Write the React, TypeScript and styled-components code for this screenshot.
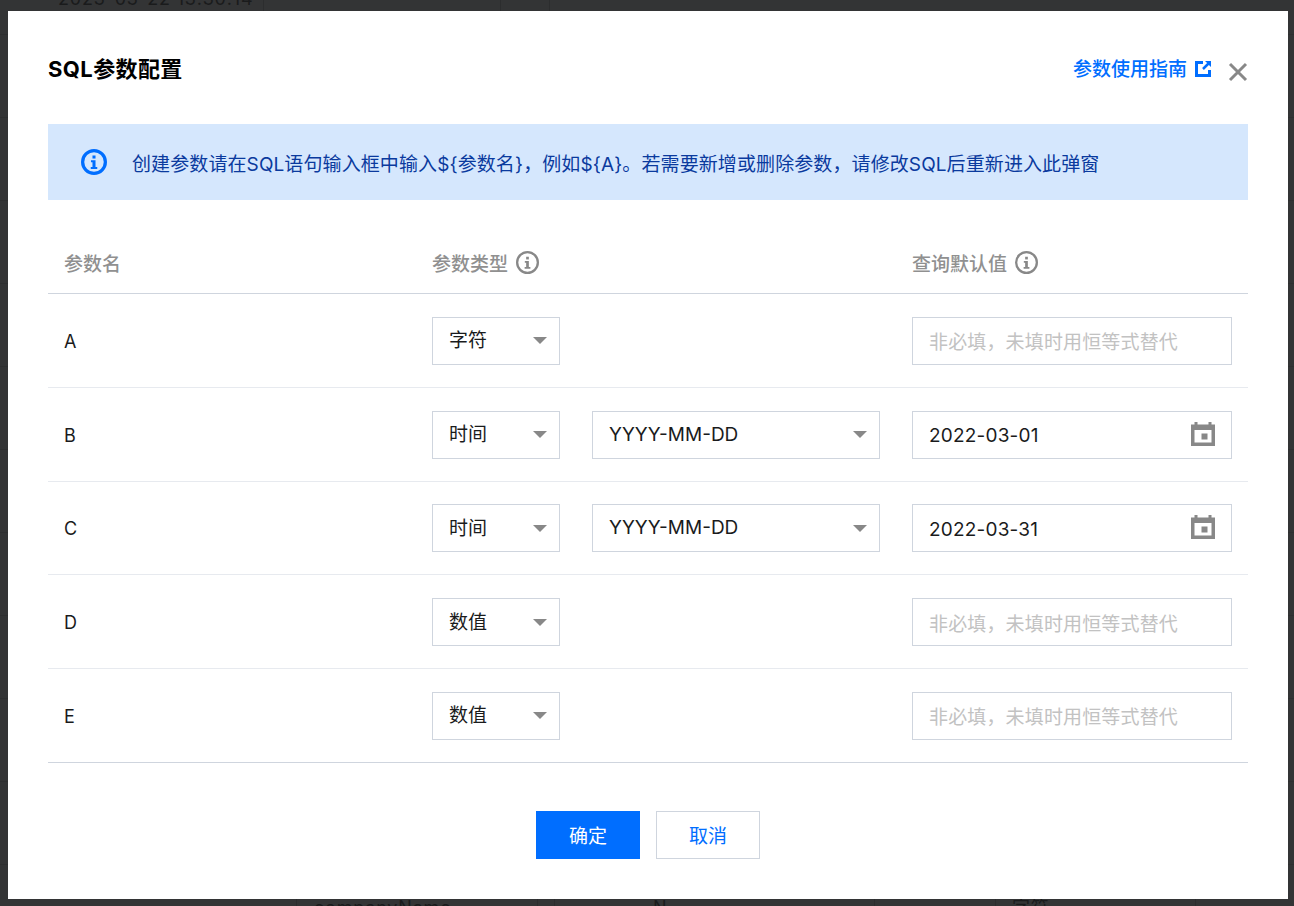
import React from 'react';
import styled, { createGlobalStyle } from 'styled-components';

const Global = createGlobalStyle`
  html, body { margin: 0; padding: 0; height: 100%; background: #333435; overflow: hidden; }
  #root { height: 100%; }
  * { box-sizing: border-box; }
`;

const FONT = `Inter, "Noto Sans CJK SC", "Liberation Sans", sans-serif`;

const Page = styled.div`
  position: relative;
  width: 1294px;
  height: 906px;
  overflow: hidden;
  background: repeating-linear-gradient(to bottom, #333435 0 34px, #2e2f30 34px 35px, #333435 35px 83px);
  font-family: ${FONT};
  color: #1a1b1c;
`;

const BackRows = styled.div`
  height: 906px;
  display: flex;
  flex-direction: column;
  justify-content: space-between;
`;

const BackRow = styled.div<{ $top?: boolean }>`
  height: ${p => (p.$top ? 11 : 7)}px;
  display: flex;
  font-size: 18px;
  line-height: 14px;
  letter-spacing: 0.8px;
  white-space: nowrap;
  overflow: hidden;
  align-items: stretch;
`;

const BackCell = styled.div<{ $w: number; $pad: number; $top?: boolean }>`
  flex: none;
  width: ${p => p.$w}px;
  padding-left: ${p => p.$pad}px;
  padding-top: ${p => (p.$top ? 0 : 2)}px;
  margin-top: ${p => (p.$top ? -8 : 0)}px;
  border-right: 1px solid #2c2d2e;
`;

const Modal = styled.div`
  position: absolute;
  left: 8px;
  top: 11px;
  width: 1280px;
  height: 888px;
  background: #fff;
  padding: 0 40px;
  font-size: 19px;
  display: flex;
  flex-direction: column;
`;

const Header = styled.div`
  height: 113px;
  display: flex;
  align-items: center;
`;

const Title = styled.h2`
  margin: 0;
  padding-bottom: 2px;
  font-size: 22px;
  font-weight: 700;
  letter-spacing: 0.4px;
  color: #000;
  flex: 1;
`;

const GuideLink = styled.a`
  display: flex;
  align-items: center;
  gap: 8px;
  color: #006eff;
  font-weight: 500;
  text-decoration: none;
`;

const ExternalSlot = styled.span`
  display: flex;
  padding-top: 2px;
`;

const CloseButton = styled.button`
  width: 20px;
  height: 20px;
  margin-left: 17px;
  margin-top: 9px;
  padding: 0;
  border: 0;
  background: none;
  display: flex;
`;

const Alert = styled.div`
  height: 76px;
  background: #d5e7fd;
  display: flex;
  align-items: center;
  gap: 25px;
  padding-left: 33px;
  color: #0a3a9e;
  letter-spacing: 0.1px;
`;

const GridRow = styled.div<{ $head?: boolean; $last?: boolean }>`
  display: grid;
  grid-template-columns: 368px 480px 1fr;
  align-items: center;
  height: ${p => (p.$head ? 94 : 93.75)}px;
  padding-top: ${p => (p.$head ? 0 : 1)}px;
  border-bottom: 1px solid ${p => (p.$head || p.$last ? '#cfd5de' : '#e7eaef')};
`;

const HeadCell = styled.div`
  display: flex;
  align-items: center;
  gap: 8px;
  padding: 32px 16px 0;
  color: #909090;
  font-weight: 500;
`;

const NameCell = styled.div`
  padding: 1px 0 0 16px;
  font-size: 18px;
`;

const TypeCell = styled.div`
  display: flex;
  gap: 32px;
  padding-left: 16px;
`;

const ValueCell = styled.div`
  padding-left: 16px;
`;

const Select = styled.div<{ $w: number }>`
  width: ${p => p.$w}px;
  height: 48px;
  border: 1px solid #cfd5de;
  display: flex;
  align-items: center;
  justify-content: space-between;
  padding: 0 12px 0 16px;
  color: #1a1b1c;
`;

const SelectLabel = styled.span<{ $latin?: boolean }>`
  padding-bottom: ${p => (p.$latin ? 1 : 4)}px;
`;

const Caret = styled.i`
  display: block;
  width: 0;
  height: 0;
  border-left: 7px solid transparent;
  border-right: 7px solid transparent;
  border-top: 7px solid #888;
`;

const InputBox = styled.div`
  width: 320px;
  height: 48px;
  border: 1px solid #cfd5de;
  display: flex;
  align-items: center;
  justify-content: space-between;
  padding: 0 16px;
`;

const DateValue = styled.span`
  padding-top: 2px;
  letter-spacing: 0.2px;
`;

const CalendarWrap = styled.span`
  display: flex;
  padding-bottom: 2px;
`;

const Placeholder = styled.span`
  color: #c2c2c2;
  letter-spacing: 0.15px;
`;

const Footer = styled.div`
  display: flex;
  justify-content: center;
  gap: 16px;
  margin-top: 48px;
`;

const Button = styled.button<{ $primary?: boolean }>`
  width: 104px;
  height: 48px;
  font: inherit;
  border: 1px solid ${p => (p.$primary ? '#006eff' : '#cfd5de')};
  background: ${p => (p.$primary ? '#006eff' : '#fff')};
  color: ${p => (p.$primary ? '#fff' : '#006eff')};
  padding: 0;
`;

const InfoIcon = ({ size, color, w }: { size: number; color: string; w: number }) => (
  <svg width={size} height={size} viewBox="0 0 24 24" fill="none" style={{ flex: 'none' }}>
    <circle cx="12" cy="12" r={12 - w / 2} stroke={color} strokeWidth={w} />
    <rect x="10.6" y="6" width="2.8" height="2.8" fill={color} />
    <path d="M9.2 10.4h4.2v6.2h1.6v1.8H9v-1.8h1.6v-4.4H9.2z" fill={color} />
  </svg>
);

const ExternalIcon = () => (
  <svg width="16" height="16" viewBox="0 0 16 16">
    <path d="M0 0h8v3H3v10h10V9h3v7H0z" fill="#006eff" />
    <path d="M10 0h6v6l-2.100-2.100-5 5-1.800-1.800 5-5z" fill="#006eff" />
  </svg>
);

const CloseIcon = () => (
  <svg width="20" height="20" viewBox="0 0 20 20">
    <path d="M2 2l16 16M18 2L2 18" stroke="#888" strokeWidth="3" fill="none" />
  </svg>
);

const CalendarIcon = () => (
  <svg width="24" height="24" viewBox="0 0 24 24">
    <path
      fillRule="evenodd"
      d="M3.500 0h3v2.500h11V0h3v2.500H24V24H0V2.500h3.500zM3.500 8V20.500h17V8z"
      fill="#888"
    />
    <rect x="10.500" y="11.500" width="6" height="6" fill="#888" />
  </svg>
);

type Row = { name: string; type: string; format?: boolean; value?: string };

const rows: Row[] = [
  { name: 'A', type: '字符' },
  { name: 'B', type: '时间', format: true, value: '2022-03-01' },
  { name: 'C', type: '时间', format: true, value: '2022-03-31' },
  { name: 'D', type: '数值' },
  { name: 'E', type: '数值' },
];

const topCells = [
  { w: 264, pad: 58, text: '2023-03-22 13:30:14' },
  { w: 237, pad: 0, text: '' },
  { w: 49, pad: 0, text: '' },
];

const bottomCells = [
  { w: 297, pad: 0, text: '' },
  { w: 241, pad: 17, text: 'companyName' },
  { w: 17, pad: 0, text: '' },
  { w: 320, pad: 98, text: 'N' },
  { w: 121, pad: 0, text: '' },
  { w: 200, pad: 16, text: '字符' },
];

export default function App() {
  return (
    <Page>
      <Global />
      <BackRows>
        <BackRow $top>
          {topCells.map((c, i) => (
            <BackCell key={i} $w={c.w} $pad={c.pad} $top>
              {c.text}
            </BackCell>
          ))}
        </BackRow>
        <BackRow>
          {bottomCells.map((c, i) => (
            <BackCell key={i} $w={c.w} $pad={c.pad}>
              {c.text}
            </BackCell>
          ))}
        </BackRow>
      </BackRows>
      <Modal>
        <Header>
          <Title>SQL参数配置</Title>
          <GuideLink>
            参数使用指南
            <ExternalSlot>
              <ExternalIcon />
            </ExternalSlot>
          </GuideLink>
          <CloseButton>
            <CloseIcon />
          </CloseButton>
        </Header>
        <Alert>
          <InfoIcon size={26} color="#006eff" w={3} />
          <span>创建参数请在SQL语句输入框中输入$&#123;参数名&#125;，例如$&#123;A&#125;。若需要新增或删除参数，请修改SQL后重新进入此弹窗</span>
        </Alert>
        <GridRow $head>
          <HeadCell>参数名</HeadCell>
          <HeadCell>
            参数类型
            <InfoIcon size={23} color="#888" w={2.4} />
          </HeadCell>
          <HeadCell>
            查询默认值
            <InfoIcon size={23} color="#888" w={2.4} />
          </HeadCell>
        </GridRow>
        <div>
          {rows.map((r, i) => (
            <GridRow key={r.name} $last={i === rows.length - 1}>
              <NameCell>{r.name}</NameCell>
              <TypeCell>
                <Select $w={128}>
                  <SelectLabel>{r.type}</SelectLabel>
                  <Caret />
                </Select>
                {r.format && (
                  <Select $w={288}>
                    <SelectLabel $latin>YYYY-MM-DD</SelectLabel>
                    <Caret />
                  </Select>
                )}
              </TypeCell>
              <ValueCell>
                <InputBox>
                  {r.value ? (
                    <>
                      <DateValue>{r.value}</DateValue>
                      <CalendarWrap>
                        <CalendarIcon />
                      </CalendarWrap>
                    </>
                  ) : (
                    <Placeholder>非必填，未填时用恒等式替代</Placeholder>
                  )}
                </InputBox>
              </ValueCell>
            </GridRow>
          ))}
        </div>
        <Footer>
          <Button $primary>确定</Button>
          <Button>取消</Button>
        </Footer>
      </Modal>
    </Page>
  );
}
